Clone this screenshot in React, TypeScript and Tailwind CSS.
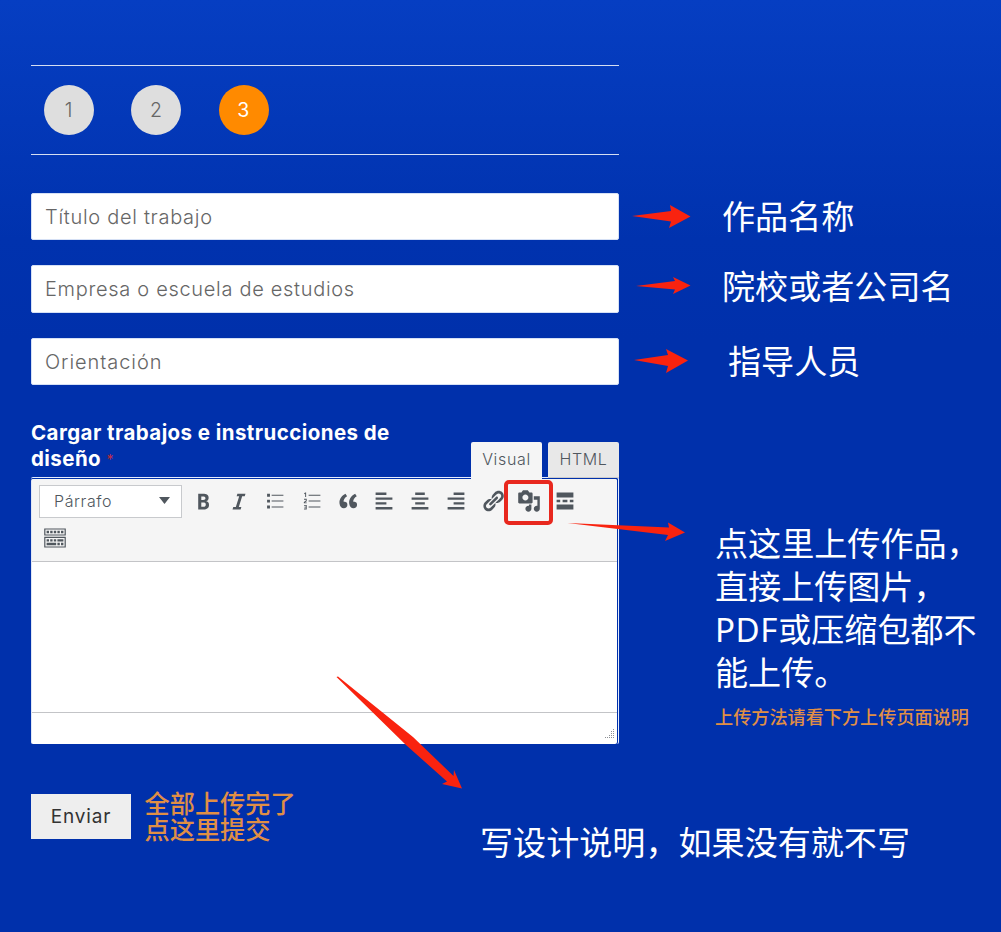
import React from 'react';

const LATIN = "font-['Inter',sans-serif]";
const CJK = "font-['Noto_Sans','Noto_Sans_CJK_SC',sans-serif]";

const tools = [
  { name: 'bold', d: 'M6 4v13h4.54c1.37 0 2.46-.33 3.26-1 .8-.66 1.2-1.58 1.2-2.77 0-.84-.17-1.51-.51-2.01s-.9-.85-1.67-1.03v-.09c.57-.1 1.02-.4 1.36-.9s.51-1.13.51-1.91c0-1.14-.39-1.98-1.17-2.5C12.75 4.26 11.5 4 9.78 4H6zm2.57 5.15V6.26h1.36c.73 0 1.27.11 1.61.32.34.22.51.58.51 1.07 0 .54-.16.92-.47 1.15s-.82.35-1.51.35h-1.5zm0 2.19h1.6c1.44 0 2.16.53 2.16 1.61 0 .6-.17 1.05-.51 1.34s-.86.43-1.57.43H8.57v-3.38z' },
  { name: 'italic', d: 'M14.78 6h-2.13l-2.8 9h2.12l-.62 2H4.6l.62-2h2.14l2.8-9H8.03l.62-2h6.75z' },
  { name: 'ul', d: 'M3.4 4h2.4v2.4H3.4zM3.4 8.9h2.4v2.4H3.4zM3.4 13.8h2.4v2.4H3.4zM7.2 4.8H17v.9H7.2zM7.2 9.6H17v.9H7.2zM7.2 14.5H17v.9H7.2z' },
  { name: 'ol', d: 'M4.3 3h.8v3.6h-.8V4l-.8.3v-.7zM3.3 8.2h2.3v2L4 11.2h1.6v.7H3.2v-1l1.6-1.2v-.8H3.3zM3.3 13.3h2.3v3.7H3.3v-.7h1.5v-.9H3.6v-.6h1.2V14H3.3zM7.2 4.8H17v.9H7.2zM7.2 9.6H17v.9H7.2zM7.2 14.5H17v.9H7.2z' },
  { name: 'quote', d: 'M9.49 13.22c0-.74-.2-1.38-.61-1.9-.62-.78-1.83-.88-2.53-.72-.29-1.65 1.11-3.75 2.92-4.65L7.88 4c-2.73 1.3-5.42 4.28-4.96 8.05C3.21 14.43 4.59 16 6.54 16c.85 0 1.56-.25 2.12-.75s.83-1.18.83-2.03zm8.05 0c0-.74-.2-1.38-.61-1.9-.63-.78-1.83-.88-2.53-.72-.29-1.65 1.11-3.75 2.92-4.65L15.93 4c-2.73 1.3-5.41 4.28-4.95 8.05.29 2.38 1.66 3.95 3.61 3.95.85 0 1.56-.25 2.12-.75s.83-1.18.83-2.03z' },
  { name: 'left', d: 'M12 5V3H3v2h9zm5 4V7H3v2h14zm-5 4v-2H3v2h9zm5 4v-2H3v2h14z' },
  { name: 'center', d: 'M14 5V3H6v2h8zm3 4V7H3v2h14zm-3 4v-2H6v2h8zm3 4v-2H3v2h14z' },
  { name: 'right', d: 'M17 5V3H8v2h9zm0 4V7H3v2h14zm0 4v-2H8v2h9zm0 4v-2H3v2h14z' },
  { name: 'link', d: 'M17.74 2.76c1.68 1.69 1.68 4.41 0 6.1l-1.53 1.52c-1.12 1.12-2.7 1.47-4.14 1.09l2.62-2.61.76-.77.76-.76c.84-.84.84-2.2 0-3.04-.84-.85-2.2-.85-3.04 0l-.77.76-3.38 3.38c-.37-1.44-.02-3.02 1.1-4.14l1.52-1.53c1.69-1.68 4.42-1.68 6.1 0zM8.59 13.43l5.34-5.34c.42-.42.42-1.1 0-1.52-.44-.43-1.13-.39-1.53 0l-5.33 5.34c-.42.42-.42 1.1 0 1.52.44.43 1.13.39 1.52 0zm-.76 2.29l4.14-4.15c.38 1.44.03 3.02-1.09 4.14l-1.52 1.53c-1.69 1.68-4.41 1.68-6.1 0-1.68-1.68-1.68-4.42 0-6.1l1.53-1.52c1.12-1.12 2.7-1.47 4.14-1.1l-4.14 4.15c-.85.84-.85 2.2 0 3.05.84.84 2.2.84 3.04 0z' },
  { name: 'media', d: 'M13 11V4c0-.55-.45-1-1-1h-1.67L9 1H5L3.67 3H2c-.55 0-1 .45-1 1v7c0 .55.45 1 1 1h10c.55 0 1-.45 1-1zM7 4.5c1.38 0 2.5 1.12 2.5 2.5S8.38 9.5 7 9.5 4.5 8.38 4.5 7 5.62 4.5 7 4.5zM14 6h5v10.5c0 1.38-1.12 2.5-2.5 2.5S14 17.88 14 16.5s1.12-2.5 2.5-2.5c.17 0 .34.02.5.05V9h-3V6zm-4 8.05V13h2v3.5c0 1.38-1.12 2.5-2.5 2.5S7 17.88 7 16.5 8.12 14 9.5 14c.17 0 .34.02.5.05z' },
  { name: 'more', d: 'M17 7V3H3v4h14zM6 11V9H3v2h3zm6 0V9H8v2h4zm5 0V9h-3v2h3zm0 6v-4H3v4h14z' },
];

const SINK =
  'M19 2v6H1V2h18zm-1 5V3H2v4h16zM5 4v2H3V4h2zm3 0v2H6V4h2zm3 0v2H9V4h2zm3 0v2h-2V4h2zm3 0v2h-2V4h2zm2 5v9H1V9h18zm-1 8v-7H2v7h16zM5 11v2H3v-2h2zm3 0v2H6v-2h2zm3 0v2H9v-2h2zm6 0v2h-5v-2h5zm-6 3v2H3v-2h8zm3 0v2h-2v-2h2zm3 0v2h-2v-2h2z';

function ToolIcon({ d }: { d: string }) {
  return (
    <svg viewBox="0 0 20 20" className="h-6 w-6 fill-[#50575e]">
      <path d={d} />
    </svg>
  );
}

function Step({ n, active }: { n: number; active?: boolean }) {
  return (
    <div
      className={`flex h-[50px] w-[50px] items-center justify-center rounded-full pt-px pr-px text-[19.500px] ${
        active ? 'bg-[#ff8a00] text-white' : 'bg-[#dedede] font-light text-[#666]'
      }`}
    >
      {n}
    </div>
  );
}

function Field({ text, className }: { text: string; className: string }) {
  return (
    <div
      className={`flex items-center rounded-[2px] border border-[#d5e0f5] bg-white pl-[13px] text-[20px] font-light text-[#666] ${className}`}
    >
      {text}
    </div>
  );
}

function Editor() {
  return (
    <section className="relative">
      <div className="flex h-[57px] items-start">
        <h2 className="w-[440px] text-[20.500px] leading-[26px] font-bold tracking-[0.43px] whitespace-nowrap text-white">
          Cargar trabajos e instrucciones de
          <br />
          diseño <span className="align-[1px] text-[14px] font-normal text-[#c02b3c]">*</span>
        </h2>
        <div className="relative z-10 mt-[22px] flex gap-[6px] text-[16px] font-light tracking-[0.65px] text-[#50575e]">
          <div className="flex h-[38px] w-[71px] items-center justify-center rounded-t-[2px] bg-[#f5f5f5] pb-[5px]">
            Visual
          </div>
          <div className="flex h-[36px] w-[71px] items-center justify-center rounded-t-[2px] border-b border-[#ccc] bg-[#e8e8e8] pb-px">
            HTML
          </div>
        </div>
      </div>
      <div className="h-[267px] rounded-[2px] border-t border-r border-[#e4ecff] pt-px pr-px">
        <div className="flex h-full flex-col overflow-hidden rounded-[2px] border-l border-[#dfe6f5] bg-white">
          <div className="h-[83px] border-b border-[#c3c4c7] bg-[#f5f5f5] pt-[5px] pl-[7px]">
            <div className="flex h-[34px] items-center">
              <div className="mr-[9px] flex h-[33px] w-[143px] items-center justify-between border border-[#c8cacd] bg-white pr-[11px] pl-[14px] text-[16px] font-light tracking-[0.6px] text-[#50575e]">
                <span>Párrafo</span>
                <svg viewBox="0 0 11 7" className="mb-[2px] h-[7px] w-[11px] fill-[#50575e]">
                  <path d="M0 0h11L5.500 7z" />
                </svg>
              </div>
              <div className="flex gap-[12.2px]">
                {tools.map((t) => (
                  <ToolIcon key={t.name} d={t.d} />
                ))}
              </div>
            </div>
            <div className="pt-[8px] pl-[3.500px]">
              <ToolIcon d={SINK} />
            </div>
          </div>
          <div className="h-[151px] border-b border-[#c3c4c7]" />
          <div className="flex flex-1 items-end justify-end pr-[2px] pb-[5px]">
            <svg viewBox="0 0 10 10" className="h-[10px] w-[10px] fill-[#8c8f94]">
              <path d="M0 8h1v1H0zM2 8h1v1H2zM4 8h1v1H4zM6 8h1v1H6zM8 8h1v1H8zM4 6h1v1H4zM6 6h1v1H6zM8 6h1v1H8zM6 4h1v1H6zM8 4h1v1H8zM6 2h1v1H6zM8 2h1v1H8zM8 0h1v1H8z" />
            </svg>
          </div>
        </div>
      </div>
      <div className="absolute top-[60px] left-[473px] h-[45px] w-[49px] rounded-[5px] border-4 border-[#e8281e]" />
    </section>
  );
}

function Arrows() {
  return (
    <svg viewBox="0 0 1001 932" className="pointer-events-none absolute inset-0 h-[932px] w-[1001px] fill-[#f9230f]">
      <path d="M632 216L671 211L670 205L690.500 216.500L669 228L671 221.500Z" />
      <path d="M636 286L675 281L673 277L690.500 285.500L673 294L675 289.500Z" />
      <path d="M634 360L668 355L666 349L688 360.500L666 373L668 366Z" />
      <path d="M567.500 523L669 527.500L668 522.500L685 532.500L665 541L668 535Z" />
      <path d="M336.500 677L338 676.500L413 737L453.500 776L454 770L462 788.500L442 784L447 781.500L406 745Z" />
    </svg>
  );
}

export default function App() {
  return (
    <main
      className={`relative flex h-[932px] w-[1001px] overflow-hidden bg-[#0030ab] bg-[linear-gradient(180deg,#063ec2_0px,#0338b8_120px,#0032ae_240px,#0030ab_340px)] ${LATIN}`}
    >
      <div className="ml-[31px] w-[588px] shrink-0 pt-[65px]">
        <div className="flex h-[90px] items-center gap-[37.400px] border-y border-[#d5def2] pl-[13px]">
          <Step n={1} />
          <Step n={2} />
          <Step n={3} active />
        </div>
        <Field text="Título del trabajo" className="mt-[38px] h-[47px] tracking-[0.7px]" />
        <Field text="Empresa o escuela de estudios" className="mt-[25px] h-[48px] tracking-[0.69px]" />
        <Field text="Orientación" className="mt-[25px] mb-[35px] h-[47px] tracking-[0.93px]" />
        <Editor />
        <div className="mt-[50px] flex items-start">
          <button className="h-[45px] w-[100px] bg-[#eee] pt-px text-[19px] tracking-[0.8px] text-[#333]">Enviar</button>
          <p className={`mt-[-4px] ml-[13.500px] text-[25.200px] leading-[26px] font-medium text-[#e08f45] ${CJK}`}>
            全部上传完了
            <br />
            点这里提交
          </p>
        </div>
      </div>
      <aside className={`flex-1 pt-[195px] text-[33.100px] leading-[43px] whitespace-nowrap text-white ${CJK}`}>
        <p className="ml-[103px]">作品名称</p>
        <p className="mt-[27px] ml-[103px]">院校或者公司名</p>
        <p className="mt-[32px] ml-[109px]">指导人员</p>
        <p className="mt-[139px] ml-[96px]">
          点这里上传作品，
          <br />
          直接上传图片，
          <br />
          <span className="tracking-[0.6px]">PDF</span>或压缩包都不
          <br />
          能上传。
        </p>
        <p className="mt-[10px] ml-[96px] text-[18.150px] leading-[26px] font-medium text-[#e08f45]">
          上传方法请看下方上传页面说明
        </p>
        <p className="mt-[91px] ml-[-139px]">写设计说明，如果没有就不写</p>
      </aside>
      <Arrows />
    </main>
  );
}
